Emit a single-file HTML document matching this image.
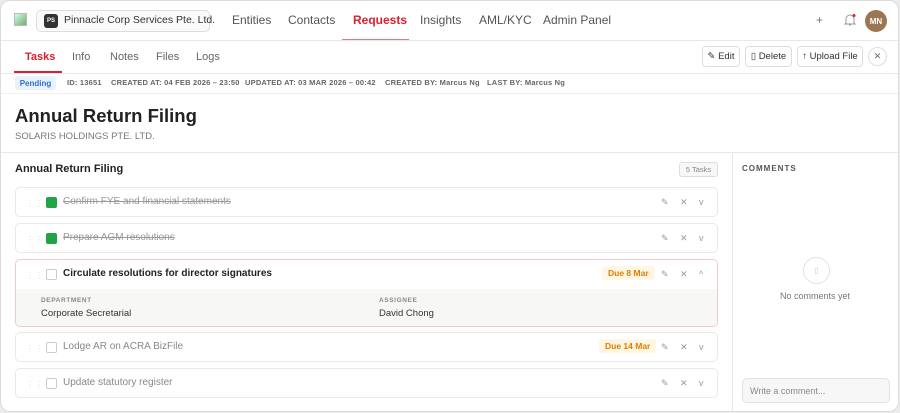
<!DOCTYPE html>
<html><head><meta charset="utf-8"><style>
*{box-sizing:border-box;margin:0;padding:0}
body{width:900px;height:413px;background:#ececec;font-family:"Liberation Sans",sans-serif;color:#2a2a2a;overflow:hidden;position:relative}
.frame{position:absolute;left:0;top:0;width:899px;height:412px;background:#fff;border:1px solid #dcdcdc;border-radius:10px;overflow:hidden}
.abs{position:absolute}
.nav{font-size:12px;color:#555;top:12px}
.hr{position:absolute;left:0;right:0;height:1px;background:#e8e8e8}
.tab{font-size:11px;color:#666;top:50px}
.btn{position:absolute;top:45px;height:21px;border:1px solid #ddd;border-radius:4px;font-size:9.5px;color:#333;display:flex;align-items:center;justify-content:center;background:#fff}
.meta{font-size:7.5px;font-weight:bold;color:#666;top:77px;letter-spacing:.2px}
.card{position:absolute;left:14px;width:703px;border:1px solid #e9e9e9;border-radius:5px;background:#fff}
.drag{position:absolute;left:10px;top:11px;font-size:8px;color:#ddd;letter-spacing:1px}
.cb{position:absolute;left:30px;width:11px;height:11px;border-radius:2px}
.cb.done{background:#22a348}
.cb.open{border:1px solid #ccc;background:#fff}
.tt{position:absolute;left:47px;font-size:10px}
.tt.done{color:#999;text-decoration:line-through}
.tt.open{color:#888}
.ic{position:absolute;font-size:9px;color:#999}
.due{position:absolute;height:14px;background:#fff6e3;color:#e07d00;font-size:8.5px;font-weight:bold;border-radius:3px;display:flex;align-items:center;padding:0 6px}
</style></head><body>
<div class="frame">
<!-- top nav -->
<div class="abs" style="left:13px;top:12px;width:13px;height:13px;border:1px solid #bbb;background:linear-gradient(135deg,#cfe 0,#9c9 60%,#7a7 100%)"></div>
<div class="abs" style="left:35px;top:9px;width:174px;height:22px;border:1px solid #ddd;border-radius:5px;background:#fafafa"></div>
<div class="abs" style="left:43px;top:13px;width:14px;height:14px;border-radius:3px;background:#333;color:#fff;font-size:6px;font-weight:bold;display:flex;align-items:center;justify-content:center">PS</div>
<div class="abs" style="left:63px;top:13px;font-size:10.5px;color:#333">Pinnacle Corp Services Pte. Ltd.</div>
<div class="abs nav" style="left:231px">Entities</div>
<div class="abs nav" style="left:287px">Contacts</div>
<div class="abs nav" style="left:352px;color:#d9202e;font-weight:bold">Requests</div>
<div class="abs nav" style="left:419px">Insights</div>
<div class="abs nav" style="left:478px">AML/KYC</div>
<div class="abs nav" style="left:542px">Admin Panel</div>
<div class="abs" style="left:341px;top:38px;width:67px;height:2px;background:#e07a80"></div>
<div class="abs" style="left:815px;top:12px;font-size:12px;color:#777">+</div>
<svg class="abs" style="left:842px;top:12px" width="14" height="14" viewBox="0 0 14 14"><path d="M3 10V6a4 4 0 018 0v4l1 1H2z M6 12h2" fill="none" stroke="#999" stroke-width="1"/><circle cx="11" cy="2.5" r="1.5" fill="#e02020"/></svg>
<div class="abs" style="left:864px;top:9px;width:22px;height:22px;border-radius:50%;background:#9b7652;color:#fff;font-size:8px;font-weight:bold;display:flex;align-items:center;justify-content:center">MN</div>
<div class="hr" style="top:39px"></div>
<!-- tabs -->
<div class="abs tab" style="left:24px;color:#d9202e;font-weight:bold">Tasks</div>
<div class="abs" style="left:13px;top:70px;width:48px;height:2px;background:#d9202e"></div>
<div class="abs tab" style="left:71px">Info</div>
<div class="abs tab" style="left:109px">Notes</div>
<div class="abs tab" style="left:155px">Files</div>
<div class="abs tab" style="left:195px">Logs</div>
<div class="btn" style="left:701px;width:38px">✎ Edit</div>
<div class="btn" style="left:744px;width:47px">▯ Delete</div>
<div class="btn" style="left:796px;width:66px">↑ Upload File</div>
<div class="abs" style="left:867px;top:46px;width:19px;height:19px;border:1px solid #ddd;border-radius:50%;font-size:9px;color:#666;display:flex;align-items:center;justify-content:center">✕</div>
<div class="hr" style="top:72px"></div>
<!-- meta -->
<div class="abs" style="left:14px;top:75px;width:41px;height:14px;background:#e8f1fd;color:#2c6fd6;font-size:8px;font-weight:bold;border-radius:3px;display:flex;align-items:center;justify-content:center">Pending</div>
<div class="abs meta" style="left:66px">ID: 13651</div>
<div class="abs meta" style="left:110px">CREATED AT: 04 FEB 2026 – 23:50</div>
<div class="abs meta" style="left:244px">UPDATED AT: 03 MAR 2026 – 00:42</div>
<div class="abs meta" style="left:384px">CREATED BY: Marcus Ng</div>
<div class="abs meta" style="left:486px">LAST BY: Marcus Ng</div>
<div class="hr" style="top:92px;background:#f0f0f0"></div>
<div class="abs" style="left:14px;top:104px;font-size:18.5px;font-weight:bold;color:#222">Annual Return Filing</div>
<div class="abs" style="left:14px;top:130px;font-size:9.5px;color:#777">SOLARIS HOLDINGS PTE. LTD.</div>
<div class="hr" style="top:151px"></div>
<div class="abs" style="left:731px;top:151px;width:1px;height:262px;background:#e8e8e8"></div>
<!-- tasks -->
<div class="abs" style="left:14px;top:162px;font-size:11px;font-weight:bold;color:#222">Annual Return Filing</div>
<div class="abs" style="left:678px;top:161px;width:39px;height:15px;border:1px solid #ddd;border-radius:3px;background:#f7f7f7;font-size:7.5px;color:#888;display:flex;align-items:center;justify-content:center">5 Tasks</div>

<div class="card" style="top:186px;height:30px"><div class="drag">⋮⋮</div><div class="cb done" style="top:9px"></div><div class="tt done" style="top:8px">Confirm FYE and financial statements</div><span class="ic" style="left:645px;top:9px">✎</span><span class="ic" style="left:664px;top:9px">✕</span><span class="ic" style="left:683px;top:9px">v</span></div>
<div class="card" style="top:222px;height:30px"><div class="drag">⋮⋮</div><div class="cb done" style="top:9px"></div><div class="tt done" style="top:8px">Prepare AGM resolutions</div><span class="ic" style="left:645px;top:9px">✎</span><span class="ic" style="left:664px;top:9px">✕</span><span class="ic" style="left:683px;top:9px">v</span></div>
<div class="card" style="top:258px;height:68px;border-color:#f2c9cb;overflow:hidden"><div class="drag">⋮⋮</div><div class="cb open" style="top:9px"></div><div class="tt" style="top:8px;font-weight:bold;color:#222">Circulate resolutions for director signatures</div><div class="due" style="left:586px;top:6px">Due 8 Mar</div><span class="ic" style="left:645px;top:9px">✎</span><span class="ic" style="left:664px;top:9px">✕</span><span class="ic" style="left:683px;top:9px">^</span>
<div style="position:absolute;left:0;right:0;top:29px;bottom:0;background:#f7f7f5"></div>
<div style="position:absolute;left:25px;top:37px;font-size:6.5px;font-weight:bold;color:#888;letter-spacing:.6px">DEPARTMENT</div>
<div style="position:absolute;left:25px;top:48px;font-size:9.5px;color:#333">Corporate Secretarial</div>
<div style="position:absolute;left:363px;top:37px;font-size:6.5px;font-weight:bold;color:#888;letter-spacing:.6px">ASSIGNEE</div>
<div style="position:absolute;left:363px;top:48px;font-size:9.5px;color:#333">David Chong</div></div>
<div class="card" style="top:331px;height:30px"><div class="drag">⋮⋮</div><div class="cb open" style="top:9px"></div><div class="tt open" style="top:8px">Lodge AR on ACRA BizFile</div><div class="due" style="left:583px;top:6px">Due 14 Mar</div><span class="ic" style="left:645px;top:9px">✎</span><span class="ic" style="left:664px;top:9px">✕</span><span class="ic" style="left:683px;top:9px">v</span></div>
<div class="card" style="top:367px;height:30px"><div class="drag">⋮⋮</div><div class="cb open" style="top:9px"></div><div class="tt open" style="top:8px">Update statutory register</div><span class="ic" style="left:645px;top:9px">✎</span><span class="ic" style="left:664px;top:9px">✕</span><span class="ic" style="left:683px;top:9px">v</span></div>
<!-- comments -->
<div class="abs" style="left:741px;top:163px;font-size:8px;font-weight:bold;color:#555;letter-spacing:1px">COMMENTS</div>
<div class="abs" style="left:802px;top:256px;width:27px;height:27px;border:1px solid #e2e2e2;border-radius:50%;font-size:8px;color:#ccc;display:flex;align-items:center;justify-content:center">▯</div>
<div class="abs" style="left:779px;top:290px;font-size:9px;color:#777">No comments yet</div>
<div class="abs" style="left:741px;top:377px;width:148px;height:25px;border:1px solid #e2e2e2;border-radius:5px;background:#f7f7f7;font-size:9px;color:#888;padding:7px 7px">Write a comment...</div>
</div>
</body></html>
